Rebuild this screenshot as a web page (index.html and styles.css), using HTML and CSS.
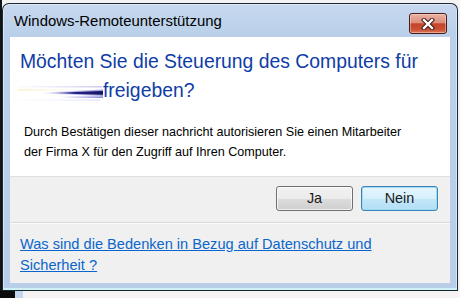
FILE: index.html
```html
<!DOCTYPE html>
<html lang="de">
<head>
<meta charset="utf-8">
<title>Windows-Remoteunterstützung</title>
<link rel="stylesheet" href="styles.css">
</head>
<body>
<div class="window">
  <div class="titlebar">
    <span class="title">Windows-Remoteunterstützung</span>
    <button class="close" aria-label="Schließen">
      <svg width="14" height="12" viewBox="0 0 14 12">
        <path d="M3 2 L11 10 M11 2 L3 10" stroke="#3a1712" stroke-width="4.4" stroke-linecap="square" fill="none"/>
        <path d="M3 2 L11 10 M11 2 L3 10" stroke="#ffffff" stroke-width="2.4" stroke-linecap="square" fill="none"/>
      </svg>
    </button>
  </div>
  <div class="client">
    <div class="main">
      <h1 class="instruction">Möchten Sie die Steuerung des Computers für<br><span class="scribble"><svg width="85" height="20" viewBox="0 0 85 20">
        <defs>
          <linearGradient id="g1" x1="0" x2="1" y1="0" y2="0">
            <stop offset="0" stop-color="#e8e8fa" stop-opacity="0.2"/>
            <stop offset="1" stop-color="#c9c9f0"/>
          </linearGradient>
          <linearGradient id="g2" x1="0" x2="1" y1="0" y2="0">
            <stop offset="0" stop-color="#f6f2cc"/>
            <stop offset="1" stop-color="#f6f2cc" stop-opacity="0"/>
          </linearGradient>
          <linearGradient id="g3" x1="0" x2="1" y1="0" y2="0">
            <stop offset="0" stop-color="#3a3aa8" stop-opacity="0"/>
            <stop offset="0.5" stop-color="#242488"/>
            <stop offset="1" stop-color="#14145e"/>
          </linearGradient>
          <linearGradient id="g4" x1="0" x2="1" y1="0" y2="0">
            <stop offset="0" stop-color="#6d6dd6" stop-opacity="0"/>
            <stop offset="1" stop-color="#5858c8"/>
          </linearGradient>
        </defs>
        <rect x="0" y="3" width="84" height="1.5" fill="url(#g1)"/>
        <rect x="0" y="6" width="62" height="1.5" fill="url(#g2)"/>
        <polygon points="22,9.6 85,6.5 85,13 22,10.4" fill="url(#g4)" opacity="0.6"/>
        <polygon points="30,9.7 85,8 85,11.8 30,10.3" fill="url(#g3)"/>
        <rect x="42" y="13.5" width="43" height="1.2" fill="url(#g4)"/>
        <rect x="0" y="16.5" width="82" height="1.2" fill="url(#g1)" opacity="0.6"/>
      </svg></span>freigeben?</h1>
      <p class="message">Durch Bestätigen dieser nachricht autorisieren Sie einen Mitarbeiter<br>der Firma X für den Zugriff auf Ihren Computer.</p>
    </div>
    <div class="actions">
      <button class="btn">Ja</button>
      <button class="btn btn-default">Nein</button>
    </div>
    <div class="footer">
      <a class="link" href="#">Was sind die Bedenken in Bezug auf Datenschutz und<br>Sicherheit ?</a>
    </div>
  </div>
</div>
<div class="below"><span class="below-dark"></span><span class="below-blue"></span><span class="below-light"></span></div>
</body>
</html>
```

FILE: styles.css
```css
html, body {
  margin: 0;
  padding: 0;
}
body {
  width: 460px;
  height: 298px;
  overflow: hidden;
  background: linear-gradient(90deg, #101418 0, #101418 2px, #f3f3f5 2px);
  font-family: "Liberation Sans", Arial, sans-serif;
}
.window {
  margin: 3px 0 0 2px;
  width: 440px;
  height: 246px;
  padding: 33px 7px 7px 7px;
  border: 1px solid #1c2833;
  border-bottom-color: #12292c;
  border-radius: 7px 7px 0 0;
  background: linear-gradient(180deg, #c6d8ee 0, #bad0ea 30px, #b9cfe9 100%);
  box-shadow: inset 0 -2px 0 #cfeff5, inset 1px 1px 0 rgba(255,255,255,0.45), inset -1px 0 0 #d2e8f6;
  display: flex;
  flex-direction: column;
}
.titlebar {
  margin-top: -33px;
  height: 33px;
  display: flex;
  justify-content: space-between;
  align-items: flex-start;
}
.title {
  padding: 9px 0 0 4px;
  font-size: 14.9px;
  line-height: 17px;
  color: #000;
}
.close {
  margin: 9px 3px 0 0;
  width: 38px;
  height: 21px;
  padding: 0;
  border: 1px solid #4a1a14;
  border-radius: 3px;
  background: linear-gradient(180deg, #eab3a4 0, #dc8f7c 45%, #c4452d 52%, #c94f33 80%, #d87a5a 100%);
  box-shadow: inset 0 0 0 1px rgba(255,230,220,0.45);
  display: flex;
  align-items: center;
  justify-content: center;
}
.close svg {
  display: block;
}
.client {
  height: 246px;
  background: #f0f0f0;
  display: flex;
  flex-direction: column;
}
.main {
  height: 139px;
  background: #fff;
  padding-top: 10px;
  box-sizing: border-box;
}
.instruction {
  margin: 0;
  padding-left: 10px;
  font-weight: normal;
  font-size: 19.35px;
  line-height: 29px;
  color: #0f3ca6;
}
.scribble {
  display: inline-block;
  width: 85px;
  height: 20px;
  margin-left: -2px;
  vertical-align: -6px;
}
.scribble svg {
  display: block;
}
.message {
  margin: 17px 0 0 0;
  padding-left: 14px;
  font-size: 12.6px;
  line-height: 20px;
  color: #000;
}
.actions {
  height: 46px;
  box-sizing: border-box;
  border-top: 1px solid #dfdfdf;
  padding: 9px 12px 0 0;
  display: flex;
  justify-content: flex-end;
  align-items: flex-start;
  gap: 8px;
}
.btn {
  width: 77px;
  height: 25px;
  padding: 0;
  border: 1px solid #707070;
  border-radius: 3px;
  background: linear-gradient(180deg, #f2f2f2 0, #ebebeb 50%, #dddddd 50%, #cfcfcf 100%);
  box-shadow: inset 0 0 0 1px rgba(255,255,255,0.7);
  font-family: "Liberation Sans", Arial, sans-serif;
  font-size: 14.4px;
  color: #1a1a1a;
  line-height: 23px;
}
.btn-default {
  border-color: #3c84b6;
  background: linear-gradient(180deg, #e6f6fd 0, #d6effb 50%, #c3e7f8 50%, #b2def5 100%);
  box-shadow: inset 0 0 0 1px #9fdcf3;
}
.footer {
  flex: 1;
  border-top: 1px solid #dadada;
  box-shadow: inset 0 1px 0 #fbfbfb;
  padding: 11px 0 0 10px;
}
.link {
  font-size: 14.6px;
  line-height: 21px;
  color: #0a66cc;
  text-decoration: underline;
}
.below {
  display: flex;
  height: 7px;
}
.below-dark {
  width: 15px;
  background: #0c0c0c;
}
.below-blue {
  width: 8px;
  background: #c3d8ef;
}
.below-light {
  flex: 1;
  background: #f7f3f5;
}
```
